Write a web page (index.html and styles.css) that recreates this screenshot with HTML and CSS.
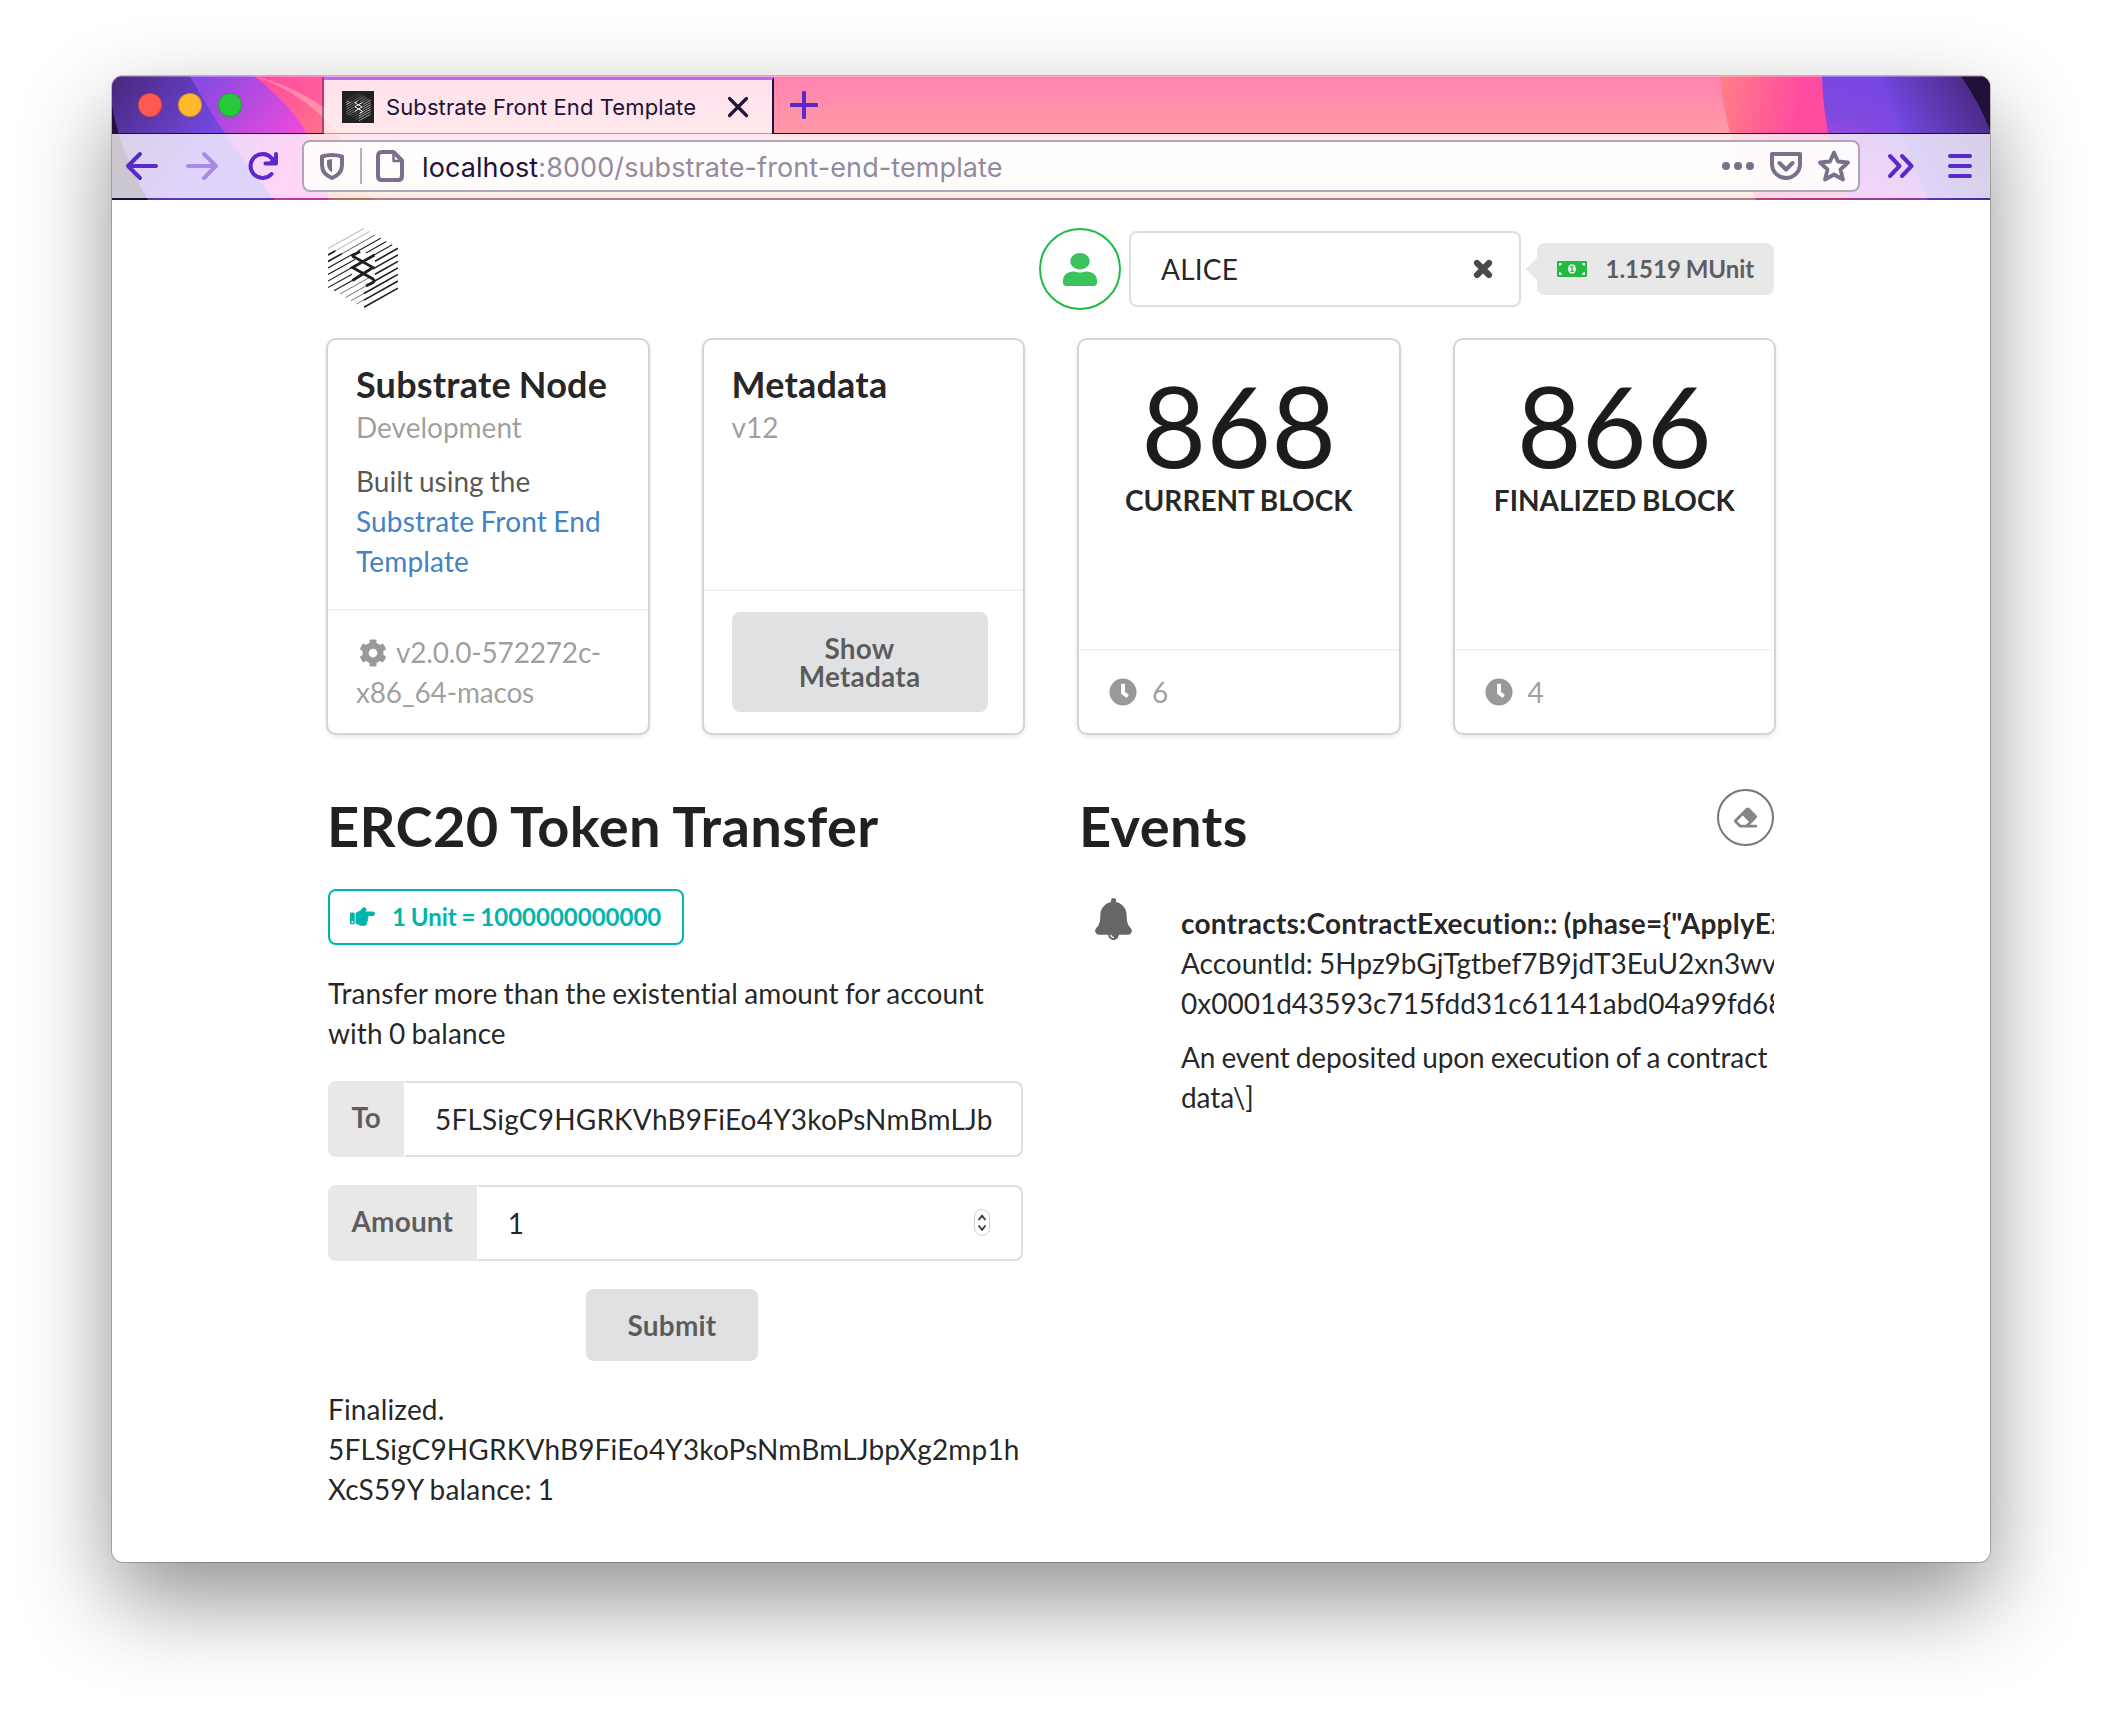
FILE: index.html
```html
<!DOCTYPE html>
<html lang="en">
<head>
<meta charset="utf-8">
<title>Substrate Front End Template</title>
<link rel="stylesheet" href="styles.css">
</head>
<body>
<svg width="0" height="0" class="defs">
  <defs>
    <symbol id="logo" viewBox="0 0 70 80">
      <g stroke="currentColor" fill="none">
        <path stroke-width=".7" opacity=".5" d="M0 20.5L36 .5M0 27L41.5 3.5"/>
        <path stroke-width=".9" opacity=".8" d="M0 33.500L47 7M0 27L8 22.500"/>
        <path stroke-width="1.100" d="M0 40L26 25.400M0 46.500L27 31.400M0 53.100L24 39.600M0 59.600L24 46.200M6 62.800L30 49.300M30 23L52.700 10.300M38 25L58.400 13.600M46 27L64.200 16.800"/>
        <path stroke-width=".9" opacity=".7" d="M12 66L42 49.200M17.500 69.500L42 55.700M23 72.700L42 62M28.500 76L40 69.500"/>
        <path stroke-width="1.600" d="M47 33.200L70 20.300M45 40.900L70 26.900M47 46.300L70 33.400M40 56.700L70 39.900M36 65.500L70 46.400M36 72.100L70 53M36 79.300L70 60.200M0 33.500L14 25.600M0 27L7 23"/>
        <path stroke-width="2.800" d="M32 23.500L24.500 27.500Q25 29 28 30L45 39.500L24.500 52.500M46.500 27L24.500 39.500L45 51Q47 53 45 54.500L38 58"/>
      </g>
    </symbol>
    <symbol id="clock" viewBox="0 0 512 512"><path fill="currentColor" d="M256 8C119 8 8 119 8 256s111 248 248 248 248-111 248-248S393 8 256 8zm57.100 350.100L224.900 294c-3.100-2.300-4.900-5.900-4.900-9.700V116c0-6.600 5.400-12 12-12h48c6.600 0 12 5.400 12 12v137.700l63.500 46.200c5.400 3.900 6.500 11.400 2.600 16.800l-28.200 38.800c-3.900 5.300-11.400 6.500-16.800 2.600z"/></symbol>
  </defs>
</svg>

<div class="window">
  <header class="chrome">
    <svg class="theme" viewBox="0 0 1878 124" preserveAspectRatio="none">
      <defs>
        <linearGradient id="g0" x1="0" y1="0" x2="0" y2="1"><stop offset="0" stop-color="#ff82b0"/><stop offset=".5" stop-color="#ff9da6"/><stop offset="1" stop-color="#ffae9f"/></linearGradient>
        <linearGradient id="g1" gradientUnits="userSpaceOnUse" x1="150" y1="0" x2="260" y2="110"><stop offset="0" stop-color="#ff4b9f"/><stop offset=".55" stop-color="#ff728a"/><stop offset="1" stop-color="#ff9a70"/></linearGradient>
        <linearGradient id="g2" gradientUnits="userSpaceOnUse" x1="90" y1="0" x2="190" y2="80"><stop offset="0" stop-color="#8549e4"/><stop offset="1" stop-color="#fb4bd8"/></linearGradient>
        <linearGradient id="g3" gradientUnits="userSpaceOnUse" x1="0" y1="0" x2="90" y2="70"><stop offset="0" stop-color="#452879"/><stop offset="1" stop-color="#7548e3"/></linearGradient>
        <linearGradient id="g4" gradientUnits="userSpaceOnUse" x1="1612" y1="0" x2="1690" y2="10"><stop offset="0" stop-color="#ff7c88"/><stop offset="1" stop-color="#ff4b9f"/></linearGradient>
        <linearGradient id="g5" gradientUnits="userSpaceOnUse" x1="1770" y1="0" x2="1730" y2="120"><stop offset="0" stop-color="#7444e4"/><stop offset=".4" stop-color="#8049de"/><stop offset="1" stop-color="#d94bd8"/></linearGradient>
        <linearGradient id="g6" gradientUnits="userSpaceOnUse" x1="1785" y1="50" x2="1860" y2="10"><stop offset="0" stop-color="#7548e3"/><stop offset="1" stop-color="#4a2b86"/></linearGradient>
        <linearGradient id="g7" gradientUnits="userSpaceOnUse" x1="150" y1="0" x2="215" y2="20"><stop offset="0" stop-color="#ff4b9f"/><stop offset="1" stop-color="#ff5f9c"/></linearGradient>
      </defs>
      <rect width="1878" height="124" fill="url(#g0)"/>
      <path fill="url(#g1)" d="M0 0H142Q230 30 260 124H0z"/>
      <path fill="url(#g7)" d="M142 0H214V33Q180 9 142 0z"/>
      <path fill="url(#g2)" d="M0 0H142Q180 30 195 58L217 124H0z"/>
      <path fill="url(#g3)" d="M0 0H78Q110 60 163 124H0z"/>
      <path fill="#20103a" d="M0 30Q8 75 36 124H0z"/>
      <path fill="url(#g4)" d="M1608 0Q1614 66 1644 124H1878V0z"/>
      <path fill="url(#g5)" d="M1710 0Q1712 66 1736 124H1878V0z"/>
      <path fill="url(#g6)" d="M1770 0Q1787 60 1816 124H1878V0z"/>
      <path fill="#20103a" d="M1849 0Q1868 28 1878 54V0z"/>
    </svg>
    <div class="tabstrip">
      <div class="lights"><i class="light red"></i><i class="light yellow"></i><i class="light green"></i></div>
      <div class="tab">
        <span class="favicon"><svg width="25" height="28"><use href="#logo"/></svg></span>
        <span class="tab-title">Substrate Front End Template</span>
        <svg class="tab-close" width="22" height="22" viewBox="0 0 22 22"><path d="M2.500 2.500L19.500 19.500M19.500 2.500L2.500 19.500" stroke="#20123a" stroke-width="3.200" stroke-linecap="round"/></svg>
      </div>
      <svg class="plus" width="28" height="28" viewBox="0 0 28 28"><path d="M14 1.500V26.500M1.500 14H26.500" stroke="#592acb" stroke-width="4" stroke-linecap="round"/></svg>
    </div>
    <div class="toolbar">
      <svg width="34" height="32" viewBox="0 0 34 32" fill="none" stroke="#592acb" stroke-width="4" stroke-linecap="round" stroke-linejoin="round"><path d="M31 16H3M15 4L3 16L15 28"/></svg>
      <svg class="fwd" width="34" height="32" viewBox="0 0 34 32" fill="none" stroke="#a78be6" stroke-width="4" stroke-linecap="round" stroke-linejoin="round"><path d="M3 16H31M19 4L31 16L19 28"/></svg>
      <svg class="reload" width="32" height="32" viewBox="0 0 32 32" fill="none" stroke="#592acb" stroke-width="4" stroke-linecap="round" stroke-linejoin="round"><path d="M24.500 24A12 12 0 1 1 24.500 8L28 12.500"/><path d="M29 4V13.500H18.500"/><path d="M28.500 6V13H22z" fill="#592acb" stroke-width="1"/></svg>
      <div class="urlbar">
        <svg width="26" height="28" viewBox="0 0 26 28" fill="none" stroke="#7b6f8a" stroke-width="4"><path stroke-linejoin="round" d="M3 4.500Q13 1.500 23 4.500V13Q23 22 13 26Q3 22 3 13z"/><path d="M8 8L13 7V20.500Q8 17 8 12z" fill="#7b6f8a" stroke="none"/></svg>
        <span class="sep"></span>
        <svg class="page" width="28" height="32" viewBox="0 0 28 32" fill="none" stroke="#7b6f8a" stroke-width="4" stroke-linejoin="round"><path d="M6 2H17.500L26 10.500V26Q26 30 22 30H6Q2 30 2 26V6Q2 2 6 2z"/><path stroke-width="2.500" d="M17.500 2V11H26"/></svg>
        <span class="url"><b>localhost</b>:8000/substrate-front-end-template</span>
        <svg width="32" height="8" viewBox="0 0 32 8" fill="#7b6f8a"><circle cx="4" cy="4" r="4"/><circle cx="16" cy="4" r="4"/><circle cx="28" cy="4" r="4"/></svg>
        <svg class="pocket" width="32" height="28" viewBox="0 0 32 28" fill="none" stroke="#7b6f8a" stroke-width="4" stroke-linecap="round" stroke-linejoin="round"><path d="M2 2H30V12A14 14 0 0 1 2 12z"/><path d="M9.500 11L16 17.500L22.500 11"/></svg>
        <svg class="star" width="32" height="32" viewBox="0 0 32 32" fill="none" stroke="#7b6f8a" stroke-width="3.800" stroke-linejoin="round"><path d="M16 2.500L20 11.500L30 12.500L22.500 19.500L25 29.500L16 24.500L7 29.500L9.500 19.500L2 12.500L12 11.500z"/></svg>
      </div>
      <svg class="more" width="28" height="28" viewBox="0 0 28 28" fill="none" stroke="#592acb" stroke-width="4" stroke-linecap="round" stroke-linejoin="round"><path d="M3 4L12.500 14L3 24M15 4L24.500 14L15 24"/></svg>
      <svg class="menu" width="24" height="24" viewBox="0 0 24 24" stroke="#592acb" stroke-width="4" stroke-linecap="round"><path d="M2 2H22M2 12H22M2 22H22"/></svg>
    </div>
  </header>

  <main class="page-body">
    <nav class="topbar">
      <svg class="brand" width="70" height="80"><use href="#logo"/></svg>
      <div class="account">
        <span class="avatar"><svg width="34" height="33" viewBox="0 0 448 512" preserveAspectRatio="none"><path fill="#3ac25c" d="M224 256c70.700 0 128-57.300 128-128S294.700 0 224 0 96 57.300 96 128s57.300 128 128 128zm89.600 32h-16.700c-22.200 10.200-46.900 16-72.900 16s-50.600-5.800-72.900-16h-16.700C60.200 288 0 348.200 0 422.400V464c0 26.500 21.500 48 48 48h352c26.500 0 48-21.500 48-48v-41.600c0-74.200-60.200-134.400-134.400-134.400z"/></svg></span>
        <div class="dropdown"><span>ALICE</span><svg width="20" height="20" viewBox="0 0 20 20"><path d="M4 4L16 16M16 4L4 16" stroke="#4a4a4a" stroke-width="6.200" stroke-linecap="round"/></svg></div>
        <div class="balance">
          <svg width="30" height="16" viewBox="0 0 30 16"><rect width="30" height="16" rx="1" fill="#21ba45"/><path fill="#e8e8e8" d="M2 2H5A3 3 0 0 1 2 5zM28 2H25A3 3 0 0 0 28 5zM2 14H5A3 3 0 0 0 2 11zM28 14H25A3 3 0 0 1 28 11z"/><ellipse cx="15" cy="8" rx="4" ry="4.800" fill="#e8e8e8"/><path d="M13.500 6.200L15.200 5.300V10.200M13.500 10.400H16.800" fill="none" stroke="#21ba45" stroke-width="1.200"/></svg>
          <span>1.1519 MUnit</span>
        </div>
      </div>
    </nav>

    <section class="cards">
      <article class="card">
        <div class="content">
          <h2>Substrate Node</h2>
          <p class="meta">Development</p>
          <p class="desc">Built using the <a>Substrate Front End Template</a></p>
        </div>
        <div class="extra"><svg class="cog" width="28" height="28" viewBox="0 0 512 512"><path fill="currentColor" d="M487.400 315.700l-42.600-24.600c4.300-23.200 4.300-47 0-70.200l42.600-24.600c4.900-2.800 7.100-8.600 5.500-14-11.100-35.600-30-67.800-54.700-94.600-3.800-4.100-10-5.100-14.800-2.300L380.800 110c-17.900-15.400-38.500-27.300-60.800-35.100V25.800c0-5.600-3.900-10.500-9.400-11.700-36.700-8.200-74.300-7.800-109.200 0-5.500 1.200-9.400 6.100-9.400 11.700V75c-22.200 7.900-42.800 19.800-60.800 35.100L88.700 85.500c-4.900-2.800-11-1.900-14.800 2.300-24.700 26.700-43.600 58.900-54.700 94.600-1.700 5.400.6 11.200 5.500 14L67.300 221c-4.300 23.200-4.300 47 0 70.200l-42.600 24.600c-4.900 2.800-7.100 8.600-5.500 14 11.100 35.600 30 67.800 54.700 94.600 3.800 4.100 10 5.100 14.800 2.300l42.600-24.600c17.900 15.400 38.500 27.300 60.800 35.100v49.200c0 5.600 3.900 10.500 9.400 11.700 36.700 8.200 74.300 7.800 109.200 0 5.500-1.200 9.400-6.100 9.400-11.700v-49.200c22.200-7.900 42.800-19.800 60.800-35.100l42.600 24.600c4.900 2.800 11 1.900 14.800-2.300 24.700-26.700 43.600-58.900 54.700-94.600 1.500-5.500-.7-11.300-5.600-14.100zM256 336c-44.100 0-80-35.900-80-80s35.900-80 80-80 80 35.900 80 80-35.900 80-80 80z"/></svg>v2.0.0-572272c-<br>x86_64-macos</div>
      </article>
      <article class="card">
        <div class="content">
          <h2>Metadata</h2>
          <p class="meta">v12</p>
        </div>
        <div class="extra"><button class="button">Show<br>Metadata</button></div>
      </article>
      <article class="card">
        <div class="content stat"><div class="value">868</div><div class="label">Current Block</div></div>
        <div class="extra timer"><svg width="28" height="28"><use href="#clock"/></svg>6</div>
      </article>
      <article class="card">
        <div class="content stat"><div class="value">866</div><div class="label">Finalized Block</div></div>
        <div class="extra timer"><svg width="28" height="28"><use href="#clock"/></svg>4</div>
      </article>
    </section>

    <section class="columns">
      <div class="transfer">
        <h1>ERC20 Token Transfer</h1>
        <div class="unit"><svg width="25" height="25" viewBox="0 0 512 512"><path fill="currentColor" d="M512 199.652c0 23.625-20.650 43.826-44.800 43.826h-99.851c16.340 17.048 18.346 49.766-6.299 70.944 14.288 22.829 2.147 53.017-16.450 62.315C353.574 425.878 322.654 448 272 448c-2.746 0-13.276-.203-16-.195-61.971.168-76.894-31.065-123.731-38.315C120.596 407.683 112 397.599 112 385.786V214.261l.002-.001c.011-18.366 10.607-35.889 28.464-43.845 28.886-12.994 95.413-49.038 107.534-77.323 7.797-18.194 21.384-29.084 40-29.092 34.222-.014 57.752 35.098 44.119 66.908-3.583 8.359-8.312 16.670-14.153 24.918H467.200c23.450 0 44.800 20.543 44.800 43.826zM96 200v192c0 13.255-10.745 24-24 24H24c-13.255 0-24-10.745-24-24V200c0-13.255 10.745-24 24-24h48c13.255 0 24 10.745 24 24zM68 368c0-11.046-8.954-20-20-20s-20 8.954-20 20 8.954 20 20 20 20-8.954 20-20z"/></svg><span>1 Unit = 1000000000000</span></div>
        <p>Transfer more than the existential amount for account with 0 balance</p>
        <div class="field"><label class="to">To</label><div class="input address">5FLSigC9HGRKVhB9FiEo4Y3koPsNmBmLJb</div></div>
        <div class="field"><label>Amount</label><div class="input"><span>1</span>
          <svg class="spinner" width="16" height="28" viewBox="0 0 16 28"><rect x=".5" y=".5" width="15" height="26" rx="7.500" fill="#fff" stroke="#cfcfcf"/><path d="M5 10.500L8 6.500L11 10.500M5 17L8 21L11 17" fill="none" stroke="#444" stroke-width="2" stroke-linecap="round" stroke-linejoin="round"/></svg></div></div>
        <div class="actions"><button class="button submit">Submit</button></div>
        <p class="status">Finalized. 5FLSigC9HGRKVhB9FiEo4Y3koPsNmBmLJbpXg2mp1hXcS59Y balance: 1</p>
      </div>
      <div class="events">
        <div class="events-head">
          <h1>Events</h1>
          <span class="eraser"><svg width="23" height="23" viewBox="0 0 512 512"><path fill="#868686" d="M497.941 273.941c18.745-18.745 18.745-49.137 0-67.882l-160-160c-18.745-18.745-49.136-18.746-67.883 0l-256 256c-18.745 18.745-18.745 49.137 0 67.882l96 96A48.004 48.004 0 0 0 144 480h356c6.627 0 12-5.373 12-12v-40c0-6.627-5.373-12-12-12H355.883l142.058-142.059zm-302.627-62.627l137.373 137.373L265.373 416H150.628l-80-80 124.686-124.686z"/></svg></span>
        </div>
        <div class="feed">
          <svg class="bell" width="37" height="42" viewBox="0 0 448 512"><path fill="#666" d="M433.884 366.059C411.634 343.809 384 316.118 384 208c0-79.394-57.831-145.269-133.663-157.830A31.845 31.845 0 0 0 256 32c0-17.673-14.327-32-32-32s-32 14.327-32 32c0 6.750 2.095 13.008 5.663 18.170C121.831 62.731 64 128.606 64 208c0 108.118-27.643 135.809-49.893 158.059C-16.042 396.208 5.325 448 48.048 448H160c0 35.346 28.654 64 64 64s64-28.654 64-64h111.943c42.638 0 64.151-51.731 33.941-81.941zM224 472a8 8 0 0 1 0 16c-22.056 0-40-17.944-40-40h16c0 13.234 10.766 24 24 24z"/></svg>
          <div class="event">
            <div class="summary">contracts:ContractExecution:: (phase={"ApplyExtrinsic":1})</div>
            <div>AccountId: 5Hpz9bGjTgtbef7B9jdT3EuU2xn3wvXs</div>
            <div>0x0001d43593c715fdd31c61141abd04a99fd6822c</div>
            <div class="doc">An event deposited upon execution of a contract from<br>data\]</div>
          </div>
        </div>
      </div>
    </section>
  </main>
</div>
</body>
</html>
```
FILE: styles.css
```css
* { box-sizing: border-box; }
body {
  margin: 0;
  padding: 76px 112px 148px;
  background: #fff;
  font: 28px/40px Lato, "Liberation Sans", sans-serif;
  font-variant-ligatures: none;
  word-spacing: -1px;
  color: rgba(0, 0, 0, .87);
}
h1, h2, p { margin: 0; }
svg { flex: none; display: block; }
.defs { position: absolute; }

.window {
  height: 1486px;
  border-radius: 11px;
  background: #fff;
  overflow: hidden;
  box-shadow: 0 0 0 1px rgba(0, 0, 0, .22), 0 38px 90px rgba(0, 0, 0, .43);
}

/* browser chrome */
.chrome {
  position: relative;
  height: 124px;
  display: flex;
  flex-direction: column;
  word-spacing: 0;
}
.chrome::after {
  content: "";
  height: 2px;
  background: rgba(32, 18, 58, .32);
}
.theme { position: absolute; inset: 0; width: 100%; height: 124px; z-index: -1; }
.chrome, .window { isolation: isolate; }
.tabstrip {
  height: 58px;
  display: flex;
  align-items: center;
  border-top: 1px solid rgba(255, 255, 255, .3);
  box-shadow: inset 0 -1px #20103a;
}
.lights { display: flex; gap: 16px; width: 212px; padding: 0 0 2px 26px; flex: none; height: 100%; align-items: center; border-right: 2px solid rgba(90, 30, 90, .5); }
.light { width: 24px; height: 24px; border-radius: 50%; border: 1px solid rgba(0, 0, 0, .18); }
.red { background: #ff5a52; }
.yellow { background: #ffb92c; }
.green { background: #27c93a; }
.tab {
  width: 450px;
  height: 57px;
  flex: none;
  display: flex;
  align-items: center;
  padding: 0 23px 1px 18px;
  background: rgba(255, 255, 255, .77);
  border-top: 3px solid #ac70ff;
  border-right: 2px solid #20123a;
  box-shadow: inset 0 -1px rgba(32, 18, 58, .22);
}
.favicon { width: 32px; height: 32px; background: #212121; color: #fff; display: grid; place-items: center; }
.tab-title { flex: 1; padding-left: 12px; font: 22px/30px Inter, sans-serif; letter-spacing: .1px; color: #20123a; white-space: nowrap; }
.plus { margin-left: 16px; margin-top: -2px; }
.toolbar { height: 64px; display: flex; align-items: center; padding-left: 13px; background: rgba(255, 255, 255, .77); }
.fwd { margin-left: 26px; }
.reload { margin-left: 28px; }
.urlbar {
  width: 1558px;
  height: 52px;
  margin-left: 23px;
  flex: none;
  display: flex;
  align-items: center;
  padding: 0 8px 0 15px;
  border: 2px solid #b3a3b6;
  border-radius: 8px;
  background: rgba(255, 255, 255, .87);
}
.sep { width: 2px; height: 36px; margin: 0 14px 0 15px; background: #bab0bd; }
.url { flex: 1; padding: 3px 0 0 18px; font: 27px/36px Inter, sans-serif; letter-spacing: .1px; color: #938aa0; white-space: nowrap; }
.url b { font-weight: 400; color: #20123a; }
.pocket, .star { margin-left: 16px; }
.more { margin-left: 27px; }
.menu { margin-left: 33px; }

/* page */
.page-body { padding: 28px 216px 0; }
.topbar { display: flex; justify-content: space-between; height: 82px; }
.brand { color: #1f1f1f; }
.account { display: flex; align-items: center; }
.avatar { width: 82px; height: 82px; border: 2px solid #21ba45; border-radius: 50%; display: grid; place-items: center; }
.dropdown {
  width: 392px;
  height: 76px;
  margin-left: 8px;
  padding: 0 26px 0 30px;
  display: flex;
  align-items: center;
  justify-content: space-between;
  border: 2px solid #dededf;
  border-radius: 8px;
  letter-spacing: .2px;
}
.balance {
  position: relative;
  width: 237px;
  height: 52px;
  margin-left: 16px;
  padding-left: 20px;
  display: flex;
  align-items: center;
  gap: 18.500px;
  border-radius: 8px;
  background: #e8e8e8;
  color: #5e5e5e;
  font-size: 24px;
  font-weight: 700;
  white-space: nowrap;
}
.balance::before { content: ""; position: absolute; left: -8px; top: 18px; width: 16px; height: 16px; background: #e8e8e8; transform: rotate(45deg); }

.cards { display: grid; grid-template-columns: repeat(4, 1fr); gap: 56px; margin-top: 29.600px; height: 393px; }
.card { display: flex; flex-direction: column; border-radius: 8px; box-shadow: 0 2px 6px #d4d4d5, 0 0 0 2px #d4d4d5; }
.content { flex: 1; padding: 21px 28px 0; }
.content h2 { font-size: 36px; line-height: 46px; letter-spacing: .2px; white-space: nowrap; }
.meta { color: rgba(0, 0, 0, .4); }
.desc { margin-top: 14px; color: rgba(0, 0, 0, .68); }
.desc a { color: #4183c4; letter-spacing: .16px; }
.extra { padding: 21px 28px; border-top: 2px solid rgba(0, 0, 0, .05); color: rgba(0, 0, 0, .4); letter-spacing: -.18px; }
.cog { display: inline-block; vertical-align: -4px; margin: 0 9px 0 3px; }
.timer { display: flex; align-items: center; gap: 15px; padding-left: 30px; }
.button {
  display: block;
  width: 256px;
  padding: 22px 0;
  border: 0;
  border-radius: 8px;
  background: #e0e1e2;
  color: rgba(0, 0, 0, .6);
  font: 700 28px/28px Lato, sans-serif;
  letter-spacing: .2px;
}
.stat { padding-top: 29px; text-align: center; }
.value { font-size: 112px; line-height: 112px; color: #1b1c1d; }
.label { font-weight: 700; text-transform: uppercase; white-space: nowrap; margin: -1px -28px 0; }

.columns { display: grid; grid-template-columns: 695px 694px; gap: 57px; margin-top: 56.400px; }
h1 { font-size: 56px; line-height: 72px; letter-spacing: .4px; padding-top: 1px; margin: 0 0 -1px -1px; }
.transfer { display: flex; flex-direction: column; gap: 28px; }
.unit {
  width: 356px;
  height: 56px;
  padding-left: 20px;
  display: flex;
  align-items: center;
  gap: 17px;
  border: 2px solid #00b5ad;
  border-radius: 8px;
  color: #00b5ad;
  font-size: 24px;
  font-weight: 700;
}
.transfer p { letter-spacing: .08px; }
.field { display: flex; height: 76px; }
.field label {
  padding: 16px 23.500px;
  border-radius: 8px 0 0 8px;
  background: #e8e8e8;
  color: rgba(0, 0, 0, .6);
  font-weight: 700;
  letter-spacing: .15px;
}
.field .to { width: 76px; padding-right: 0; letter-spacing: -.2px; }
.input {
  flex: 1;
  display: flex;
  align-items: center;
  justify-content: space-between;
  padding: 1px 31px 0 29px;
  border: 2px solid #dededf;
  border-left-color: transparent;
  border-radius: 0 8px 8px 0;
  white-space: nowrap;
}
.address { letter-spacing: .2px; padding-right: 0; }
.spinner { margin-top: -1px; }
.actions { display: flex; justify-content: center; padding-right: 7px; }
.submit { width: 172px; }
.transfer .status { overflow-wrap: anywhere; word-break: break-word; letter-spacing: .16px; }

.events { overflow: hidden; padding-left: 1px; margin-left: -1px; }
.events-head { display: flex; justify-content: space-between; }
.eraser { width: 57px; height: 57px; border: 2px solid #767676; border-radius: 50%; display: grid; place-items: center; }
.feed { display: flex; padding: 37px 0 0 15px; }
.event { flex: 1; margin: 5px 0 0 49px; white-space: nowrap; }
.summary { font-weight: 700; letter-spacing: .23px; }
.doc { margin-top: 14px; letter-spacing: -.1px; }
```
